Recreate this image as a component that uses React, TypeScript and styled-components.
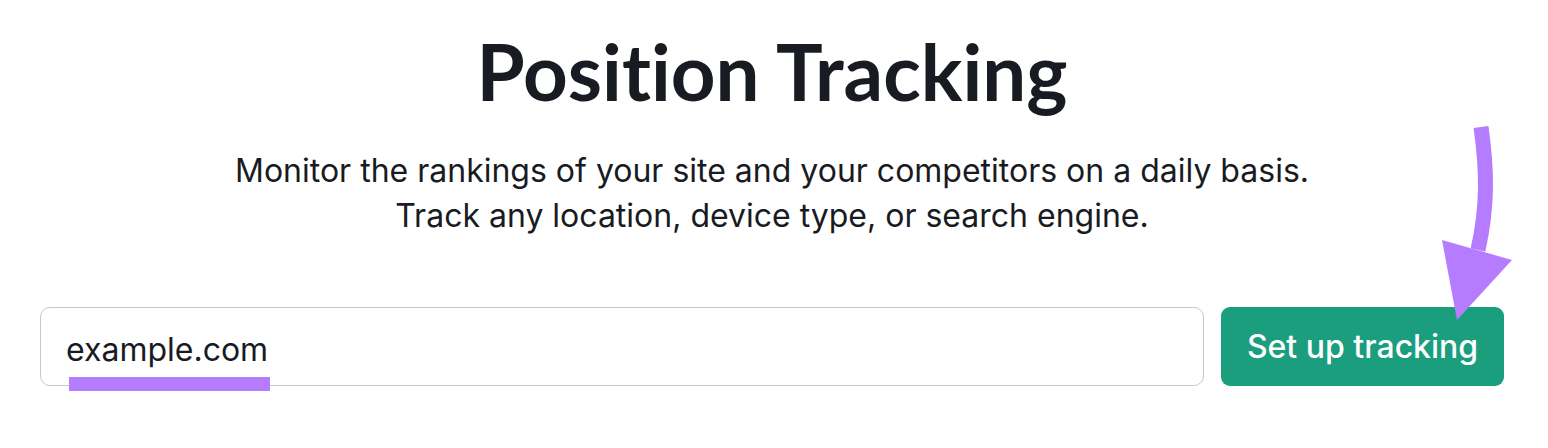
import React from "react";
import styled, { createGlobalStyle } from "styled-components";

const GlobalStyle = createGlobalStyle`
  html, body {
    margin: 0;
    padding: 0;
    background: #ffffff;
  }
  body {
    font-family: Inter, "Noto Sans", "Liberation Sans", sans-serif;
    color: #191b23;
  }
`;

const Page = styled.main`
  position: relative;
  width: 1548px;
  height: 448px;
  box-sizing: border-box;
  padding: 31px 44px 0 40px;
  display: flex;
  flex-direction: column;
  align-items: center;
  overflow: hidden;
`;

const Title = styled.h1`
  margin: 0;
  font-family: Lato, Inter, "Liberation Sans", sans-serif;
  font-weight: 700;
  font-size: 78px;
  line-height: 80px;
  font-variant-ligatures: none;
  font-feature-settings: "liga" 0, "clig" 0;
  color: #191b23;
`;

const Subtitle = styled.p`
  margin: 37px 0 0;
  font-size: 32px;
  line-height: 45px;
  font-weight: 400;
  text-align: center;
  color: #191b23;
`;

const FormRow = styled.div`
  position: relative;
  margin-top: 69px;
  width: 100%;
  display: flex;
  gap: 17px;
`;

const Field = styled.div`
  flex: 1;
  height: 79px;
  box-sizing: border-box;
  border: 1.5px solid #c7c7cc;
  border-radius: 10px;
  display: flex;
  align-items: center;
  padding: 6px 0 0 25px;
  font-size: 32px;
  color: #191b23;
`;

const Button = styled.button`
  width: 283px;
  height: 79px;
  border: none;
  border-radius: 9px;
  background: #1a9e7e;
  color: #ffffff;
  font-family: Inter, "Liberation Sans", sans-serif;
  font-size: 32px;
  font-weight: 500;
  display: flex;
  align-items: center;
  justify-content: center;
  padding: 0;
`;

const Highlight = styled.span`
  position: absolute;
  left: 29px;
  top: 70px;
  width: 201px;
  height: 14px;
  background: #b57cff;
`;

const ArrowOverlay = styled.svg`
  position: absolute;
  left: 1430px;
  top: 120px;
  width: 90px;
  height: 210px;
  pointer-events: none;
`;

export default function App() {
  return (
    <>
      <GlobalStyle />
      <Page>
        <Title>Position Tracking</Title>
        <Subtitle>
          Monitor the rankings of your site and your competitors on a daily basis.
          <br />
          Track any location, device type, or search engine.
        </Subtitle>
        <FormRow>
          <Field>example.com</Field>
          <Button>Set up tracking</Button>
          <Highlight />
        </FormRow>
        <ArrowOverlay viewBox="0 0 90 210">
          <path
            d="M51 7 C57 50 58 85 48 130"
            stroke="#b57cff"
            strokeWidth="15"
            fill="none"
            strokeLinecap="butt"
          />
          <polygon points="12,120 82,140 27,200" fill="#b57cff" />
        </ArrowOverlay>
      </Page>
    </>
  );
}
